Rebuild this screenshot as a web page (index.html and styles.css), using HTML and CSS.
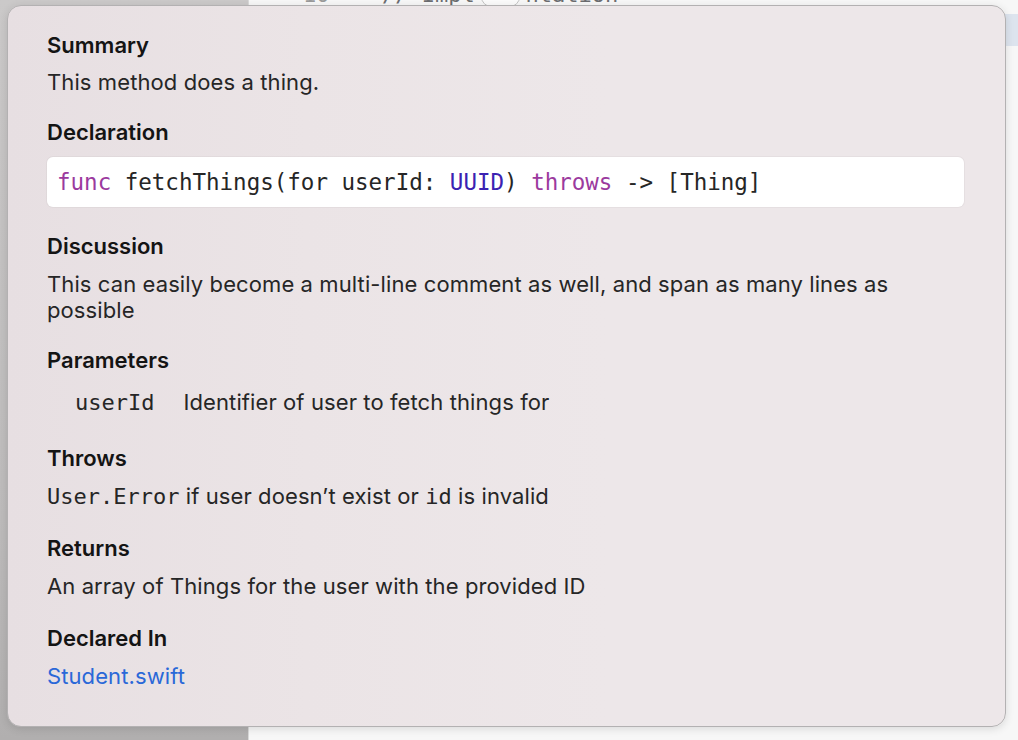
FILE: index.html
```html
<!DOCTYPE html>
<html>
<head>
<meta charset="utf-8">
<link rel="stylesheet" href="styles.css">
</head>
<body>
<div class="desk">
  <div class="sidebar"></div>
  <div class="editor">
    <div class="code-line"><span class="lineno">10</span><span class="comment">// Impl<span class="token-pill">eme</span>ntation</span></div>
    <div class="current-line"></div>
  </div>
</div>
<div class="popover">
  <section class="sec sec-first">
    <h2 class="head">Summary</h2>
    <p class="body">This method does a thing.</p>
  </section>
  <section class="sec">
    <h2 class="head">Declaration</h2>
    <div class="decl"><span class="kw">func</span> fetchThings(for userId: <span class="type">UUID</span>) <span class="kw">throws</span> -&gt; [Thing]</div>
  </section>
  <section class="sec sec-after-code">
    <h2 class="head">Discussion</h2>
    <p class="body">This can easily become a multi-line comment as well, and span as many lines as possible</p>
  </section>
  <section class="sec">
    <h2 class="head">Parameters</h2>
    <div class="param"><span class="mono">userId</span><span class="param-desc">Identifier of user to fetch things for</span></div>
  </section>
  <section class="sec">
    <h2 class="head">Throws</h2>
    <p class="body"><span class="mono">User.Error</span> if user doesn’t exist or <span class="mono">id</span> is invalid</p>
  </section>
  <section class="sec sec-mid">
    <h2 class="head">Returns</h2>
    <p class="body">An array of Things for the user with the provided ID</p>
  </section>
  <section class="sec sec-wide">
    <h2 class="head">Declared In</h2>
    <p class="body"><a class="link" href="#">Student.swift</a></p>
  </section>
</div>
</body>
</html>
```

FILE: styles.css
```css
html, body {
  margin: 0;
  padding: 0;
}
body {
  width: 1018px;
  height: 740px;
  overflow: hidden;
  position: relative;
  font-family: Inter, "Noto Sans", "Liberation Sans", sans-serif;
  background: #ececec;
}
.desk {
  display: flex;
  height: 740px;
}
.sidebar {
  width: 248px;
  background: linear-gradient(to bottom, #cbc9c9 0%, #bdbbbb 70%, #b1afaf 100%);
  border-right: 1px solid #d9d9d9;
}
.editor {
  flex: 1;
  background: #f7f7f7;
  display: flex;
  flex-direction: column;
}
.code-line {
  height: 14px;
  display: flex;
  align-items: flex-end;
  overflow: hidden;
  font-family: "DejaVu Sans Mono", "Liberation Mono", monospace;
  font-size: 22px;
  line-height: 22px;
  color: #6f6f73;
  margin-top: -8px;
}
.lineno {
  margin-left: 54px;
  width: 79px;
  color: #9a9a9a;
}
.comment {
  color: #6c6d70;
}
.token-pill {
  color: transparent;
  background: #fbfbfb;
  border: 1px solid #c4c4c4;
  border-radius: 14px;
  margin: 0 4px 0 5px;
}
.current-line {
  margin-top: 8px;
  height: 32px;
  background: #dde4ee;
}
.popover {
  position: absolute;
  left: 7px;
  top: 5px;
  width: 999px;
  height: 722px;
  box-sizing: border-box;
  border: 1px solid #b3b1b2;
  border-radius: 14px;
  background: linear-gradient(to right, #e7dfe2 0%, #ebe4e6 30%, #ede7e9 60%, #ede7e9 100%);
  box-shadow: 0 2px 8px rgba(0, 0, 0, 0.12);
  padding: 26px 41px 0 39px;
}
.sec {
  margin-top: 24px;
}
.sec-first {
  margin-top: 0;
}
.sec-after-code {
  margin-top: 26px;
}
.sec-mid {
  margin-top: 25px;
}
.sec-wide {
  margin-top: 26px;
}
.head {
  margin: 0;
  font-size: 22px;
  line-height: 26px;
  font-weight: 600;
  color: #141414;
}
.body {
  margin: 12px 0 0;
  font-size: 22px;
  line-height: 26px;
  color: #262626;
  letter-spacing: 0.1px;
}
.sec-first .body {
  margin-top: 11px;
}
.mono {
  font-family: "DejaVu Sans Mono", "Liberation Mono", monospace;
  font-size: 22px;
  letter-spacing: 0;
}
.decl {
  margin-top: 12px;
  height: 50px;
  box-sizing: border-box;
  background: #ffffff;
  border-radius: 6px;
  box-shadow: 0 0 0 1px rgba(0, 0, 0, 0.03);
  padding: 0 10px;
  display: flex;
  align-items: center;
  white-space: pre;
  font-family: "DejaVu Sans Mono", "Liberation Mono", monospace;
  font-size: 22.5px;
  color: #262626;
}
.kw {
  color: #9b3a9e;
}
.type {
  color: #3b22b2;
}
.param {
  margin-top: 11px;
  padding: 5px 0 5px 28px;
  display: flex;
  align-items: baseline;
  font-size: 22px;
  line-height: 26px;
  color: #262626;
  letter-spacing: 0.1px;
}
.param-desc {
  margin-left: 29px;
}
.link {
  color: #2a68d8;
  text-decoration: none;
}
```
